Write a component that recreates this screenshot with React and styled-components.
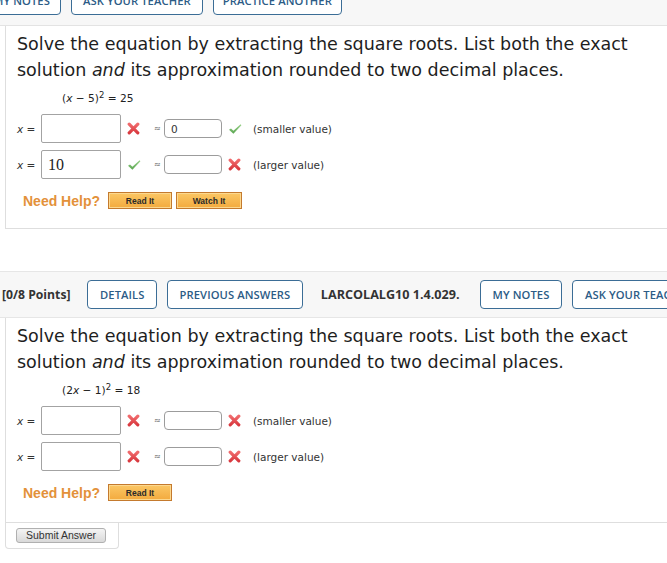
import React from "react";
import styled, { createGlobalStyle } from "styled-components";

const GlobalStyle = createGlobalStyle`
  html, body {
    margin: 0;
    padding: 0;
    background: #ffffff;
    overflow: hidden;
  }
  body {
    width: 667px;
    font-family: "DejaVu Sans", Verdana, sans-serif;
    color: #222;
  }
`;

const Page = styled.div`
  width: 667px;
  height: 563px;
  overflow: hidden;
`;

const TopBar = styled.div`
  height: 25px;
  background: #f7f7f7;
  border-bottom: 1px solid #e3e3e3;
  display: flex;
  align-items: flex-end;
  overflow: hidden;
  padding-bottom: 10px;
  box-sizing: content-box;
  margin-top: -10px;
`;

const HeaderBar = styled.div`
  margin-top: 42px;
  height: 45px;
  background: #f7f7f7;
  border-top: 1px solid #e6e6e6;
  border-bottom: 1px solid #e6e6e6;
  display: flex;
  align-items: center;
  white-space: nowrap;
  overflow: hidden;
  padding-left: 2px;
  font-family: "Open Sans", "DejaVu Sans", sans-serif;
`;

const ButtonRow = styled.div`
  display: flex;
  gap: 10px;
  margin-left: ${(p) => p.$offset || 0}px;
  flex-shrink: 0;
`;

const NavButton = styled.button`
  flex-shrink: 0;
  height: 29px;
  padding: 0 ${(p) => p.$px || 11.5}px;
  box-sizing: border-box;
  background: #ffffff;
  border: 1.5px solid #3b6d96;
  border-radius: 4px;
  color: #2c5c86;
  font-family: "Open Sans", "DejaVu Sans", sans-serif;
  font-weight: 600;
  font-size: 11.2px;
  letter-spacing: 0.1px;
  white-space: nowrap;
`;

const Points = styled.span`
  font-weight: 700;
  font-size: 12.2px;
  color: #333;
  margin-right: 17px;
`;

const Code = styled.span`
  font-weight: 700;
  font-size: 12.6px;
  color: #333;
  margin: 0 20px 0 18px;
`;

const QuestionBox = styled.div`
  margin-left: 5px;
  border-left: 1px solid #dedede;
  border-bottom: 1px solid #dedede;
  padding: 5px 0 ${(p) => p.$pb || 19}px 11px;
`;

const Prompt = styled.p`
  margin: 0;
  font-size: 17.5px;
  line-height: 26px;
  color: #1e1e1e;
`;

const Equation = styled.div`
  margin: 8px 0 0 45px;
  font-size: 10.6px;
  line-height: 14px;
  color: #222;
  sup {
    font-size: 8.5px;
    vertical-align: 4px;
    line-height: 0;
  }
`;

const AnswerRow = styled.div`
  display: flex;
  align-items: center;
  height: 29px;
  margin-top: ${(p) => p.$gap}px;
`;

const Var = styled.span`
  width: 24px;
  font-size: 10.5px;
  color: #333;
`;

const BigInput = styled.div`
  width: 80px;
  height: 29px;
  box-sizing: border-box;
  border: 1px solid #a3a3a3;
  border-radius: 2px;
  padding-left: 6px;
  display: flex;
  align-items: center;
  font-family: "Liberation Serif", "Times New Roman", serif;
  font-size: 16px;
  color: #222;
`;

const MarkSlot = styled.span`
  box-sizing: border-box;
  width: ${(p) => p.$w}px;
  padding-left: ${(p) => p.$pl}px;
  display: flex;
  align-items: center;
  flex-shrink: 0;
`;

const Approx = styled.span`
  width: 10px;
  font-size: 8px;
  color: #555;
`;

const SmallInput = styled.div`
  width: 58px;
  height: 19px;
  box-sizing: border-box;
  border: 1px solid #9c9c9c;
  border-radius: 4px;
  padding-left: 6px;
  display: flex;
  align-items: center;
  font-size: 10.5px;
  color: #333;
`;

const Hint = styled.span`
  font-size: 10.5px;
  color: #333;
`;

const HelpRow = styled.div`
  display: flex;
  align-items: center;
  margin: 13px 0 0 6px;
  height: 17px;
`;

const NeedHelp = styled.span`
  font-family: "Liberation Sans", Arial, sans-serif;
  font-weight: 700;
  font-size: 14px;
  color: #e3913a;
  margin-right: 8px;
`;

const HelpButton = styled.span`
  width: ${(p) => p.$w}px;
  height: 17px;
  box-sizing: border-box;
  margin-right: 4px;
  background: linear-gradient(#fbc765, #f3aa3e);
  border: 1px solid #c47a2e;
  box-shadow: inset 0 0 0 1px #fcd88f;
  display: flex;
  align-items: center;
  justify-content: center;
  font-family: "Liberation Sans", Arial, sans-serif;
  font-weight: 700;
  font-size: 8.5px;
  color: #2a2a2a;
`;

const SubmitTab = styled.div`
  margin-left: 5px;
  width: 102px;
  height: 25px;
  box-sizing: content-box;
  border: 1px solid #dedede;
  border-top: none;
  border-radius: 0 0 4px 4px;
  display: flex;
  align-items: center;
  padding-left: 10px;
`;

const SubmitButton = styled.button`
  width: 90px;
  height: 15px;
  padding: 0;
  border: 1px solid #b0b0b0;
  border-radius: 3px;
  background: linear-gradient(#f4f4f4, #d9d9d9);
  font-family: "Liberation Sans", Arial, sans-serif;
  font-size: 10.5px;
  color: #333;
  line-height: 13px;
`;

const Cross = () => (
  <svg width="13" height="13" viewBox="0 0 13 13">
    <defs>
      <linearGradient id="xg" x1="0" y1="0" x2="0" y2="1">
        <stop offset="0" stopColor="#f06a6c" />
        <stop offset="1" stopColor="#d93a40" />
      </linearGradient>
    </defs>
    <path
      d="M2.2 2.2 L10.8 10.8 M10.8 2.2 L2.2 10.8"
      stroke="url(#xg)"
      strokeWidth="3.2"
      strokeLinecap="round"
    />
  </svg>
);

const Check = () => (
  <svg width="14" height="12" viewBox="0 0 14 12">
    <defs>
      <linearGradient id="cg" x1="0" y1="0" x2="0" y2="1">
        <stop offset="0" stopColor="#9ad28a" />
        <stop offset="1" stopColor="#58a44f" />
      </linearGradient>
    </defs>
    <path d="M1 6.8 L3 5.6 L5.4 7.8 L12.6 1.2 L13.4 2.2 L5.4 10.8 Z" fill="url(#cg)" />
  </svg>
);

const Mark = ({ ok }) => (ok ? <Check /> : <Cross />);

const Row = ({ gap, value, approx, first, second, hint }) => (
  <AnswerRow $gap={gap}>
    <Var>
      <i>x</i> =
    </Var>
    <BigInput>{value}</BigInput>
    <MarkSlot $w={33} $pl={6}>
      <Mark ok={first} />
    </MarkSlot>
    <Approx>≈</Approx>
    <SmallInput>{approx}</SmallInput>
    <MarkSlot $w={31} $pl={6}>
      <Mark ok={second} />
    </MarkSlot>
    <Hint>{hint}</Hint>
  </AnswerRow>
);

const promptText = (
  <Prompt>
    Solve the equation by extracting the square roots. List both the exact
    solution <i>and</i> its approximation rounded to two decimal places.
  </Prompt>
);

export default function App() {
  return (
    <Page>
      <GlobalStyle />
      <TopBar>
        <ButtonRow $offset={-18}>
          <NavButton $px={10}>MY NOTES</NavButton>
          <NavButton $px={11}>ASK YOUR TEACHER</NavButton>
          <NavButton $px={9}>PRACTICE ANOTHER</NavButton>
        </ButtonRow>
      </TopBar>

      <QuestionBox>
        {promptText}
        <Equation>
          (<i>x</i> − 5)<sup>2</sup> = 25
        </Equation>
        <Row gap={9} value="" approx="0" first={false} second={true} hint="(smaller value)" />
        <Row gap={7} value="10" approx="" first={true} second={false} hint="(larger value)" />
        <HelpRow>
          <NeedHelp>Need Help?</NeedHelp>
          <HelpButton $w={64}>Read It</HelpButton>
          <HelpButton $w={66}>Watch It</HelpButton>
        </HelpRow>
      </QuestionBox>

      <HeaderBar>
        <Points>[0/8 Points]</Points>
        <ButtonRow>
          <NavButton>DETAILS</NavButton>
          <NavButton>PREVIOUS ANSWERS</NavButton>
        </ButtonRow>
        <Code>LARCOLALG10 1.4.029.</Code>
        <ButtonRow>
          <NavButton $px={12}>MY NOTES</NavButton>
          <NavButton>ASK YOUR TEACHER</NavButton>
        </ButtonRow>
      </HeaderBar>

      <QuestionBox $pb={21}>
        {promptText}
        <Equation>
          (2<i>x</i> − 1)<sup>2</sup> = 18
        </Equation>
        <Row gap={9} value="" approx="" first={false} second={false} hint="(smaller value)" />
        <Row gap={7} value="" approx="" first={false} second={false} hint="(larger value)" />
        <HelpRow>
          <NeedHelp>Need Help?</NeedHelp>
          <HelpButton $w={64}>Read It</HelpButton>
        </HelpRow>
      </QuestionBox>
      <SubmitTab>
        <SubmitButton>Submit Answer</SubmitButton>
      </SubmitTab>
    </Page>
  );
}
